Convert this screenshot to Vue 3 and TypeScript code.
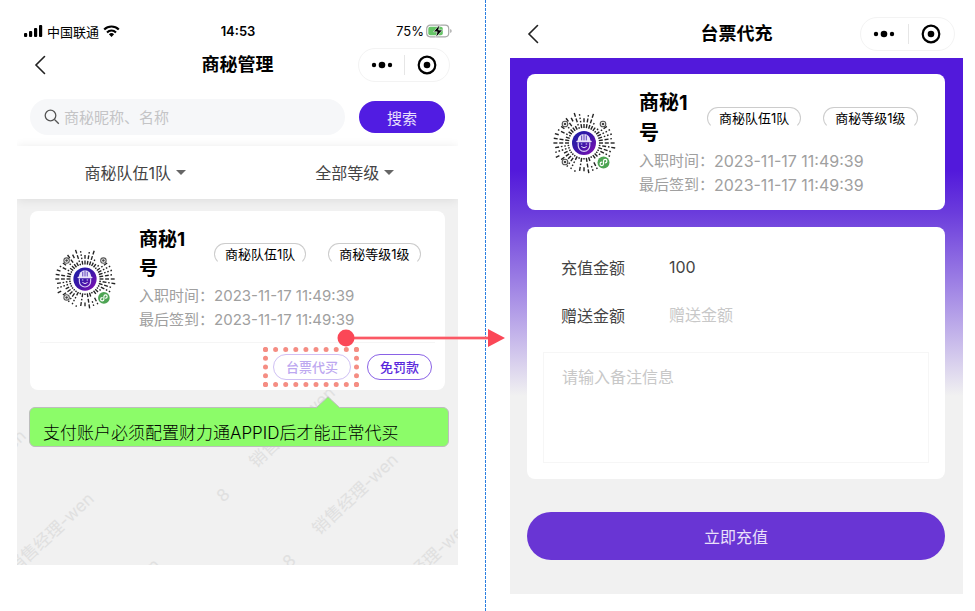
<script setup lang="ts">
import { ref } from 'vue'

interface Tick {
  x1: number
  y1: number
  x2: number
  y2: number
  w: number
}

interface Mark {
  x: number
  y: number
  text: string
}

const keyword = ref('')
const amount = ref('100')
const gift = ref('')
const remark = ref('')
const team = ref('商秘队伍1队')
const level = ref('全部等级')

const member = {
  name: '商秘1号',
  tags: ['商秘队伍1队', '商秘等级1级'],
  rows: [
    { label: '入职时间：', value: '2023-11-17 11:49:39' },
    { label: '最后签到：', value: '2023-11-17 11:49:39' },
  ],
}

// Radial code: dashes along evenly spaced rays, leaving room for the finders and the badge
function buildTicks(): Tick[] {
  const list: Tick[] = []
  const reserved = [
    [13, 13, 4],
    [51, 13, 4],
    [13, 51, 4],
    [51, 52, 8],
  ]
  let seed = 11
  const next = (): number => {
    seed = (seed * 1103 + 377) % 7919
    return seed / 7919
  }
  const rays = 40
  for (let i = 0; i < rays; i++) {
    const angle = (i / rays) * Math.PI * 2
    const cos = Math.cos(angle)
    const sin = Math.sin(angle)
    let r = 15
    while (r < 30) {
      const len = next() > 0.5 ? 4 : 1.6
      const end = Math.min(r + len, 32)
      const mid = (r + end) / 2
      const mx = 32 + cos * mid
      const my = 32 + sin * mid
      const blocked = reserved.some(([x, y, d]) => Math.hypot(mx - x, my - y) < d)
      if (!blocked && (r < 16 || next() > 0.2)) {
        list.push({
          x1: 32 + cos * r,
          y1: 32 + sin * r,
          x2: 32 + cos * end,
          y2: 32 + sin * end,
          w: 1.4,
        })
      }
      r = end + 1.8
    }
  }
  return list
}

const ticks = buildTicks()

const marks: Mark[] = [
  { x: -34, y: 271, text: '销售经理-wen' },
  { x: 34, y: 334, text: '销售经理-wen' },
  { x: 100, y: 400, text: '销售经理-wen' },
  { x: 275, y: 228, text: '销售经理-wen' },
  { x: 338, y: 295, text: '销售经理-wen' },
  { x: 411, y: 361, text: '销售经理-wen' },
  { x: 206, y: 296, text: '8' },
  { x: 272, y: 362, text: '8' },
]
</script>

<template>
  <main class="board">
    <svg class="defs" aria-hidden="true">
      <defs>
        <linearGradient id="face-fill" x1="0" y1="0" x2="1" y2="1">
          <stop offset="0" stop-color="#1b1fa6" />
          <stop offset="0.5" stop-color="#3c16a8" />
          <stop offset="1" stop-color="#8a10b4" />
        </linearGradient>
        <symbol id="code" viewBox="0 0 64 64">
          <line
            v-for="(t, i) in ticks"
            :key="i"
            :x1="t.x1"
            :y1="t.y1"
            :x2="t.x2"
            :y2="t.y2"
            :stroke-width="t.w"
            stroke="#222"
          />
          <g fill="#fff" stroke="#555" stroke-width="1.1">
            <circle cx="13" cy="13" r="2.800" />
            <circle cx="51" cy="13" r="2.800" />
            <circle cx="13" cy="51" r="2.800" />
          </g>
          <g fill="#444">
            <circle cx="13" cy="13" r="1.300" />
            <circle cx="51" cy="13" r="1.300" />
            <circle cx="13" cy="51" r="1.300" />
          </g>
          <circle cx="32" cy="32" r="12" fill="url(#face-fill)" />
          <path d="M25.500 30a6.500 7 0 0 1 13 0z" fill="#e9e3fa" />
          <path d="M29.700 29.500v-5M32 29.500v-6.500M34.300 29.500v-5" stroke="#4b2bb0" stroke-width="0.900" />
          <path d="M25 30.500h14" stroke="#e9e3fa" stroke-width="1.500" stroke-linecap="round" />
          <path d="M26.200 31.500v3a5.800 5.800 0 0 0 11.600 0v-3" fill="none" stroke="#d9cdf5" stroke-width="1.200" />
          <path d="M29.300 35.500q2.700 2.600 5.400 0M28.800 33h1.500M33.700 33h1.500" fill="none" stroke="#e9e3fa" stroke-width="1" />
          <circle cx="51.500" cy="51.500" r="6" fill="#4da453" />
          <path
            d="M49.800 51.200a1.700 1.700 0 1 0 1.700 1.800v-3a1.700 1.700 0 1 1 1.800 1.800"
            fill="none"
            stroke="#fff"
            stroke-width="1.200"
            stroke-linecap="round"
          />
        </symbol>
        <symbol id="back" viewBox="0 0 12 20">
          <path d="M10.500 1.500 2 10l8.500 8.500" fill="none" stroke="#222" stroke-width="1.600" stroke-linecap="round" />
        </symbol>
        <symbol id="dots" viewBox="0 0 22 8">
          <circle cx="3" cy="4" r="2.200" />
          <circle cx="11" cy="4" r="3.300" />
          <circle cx="19" cy="4" r="2.200" />
        </symbol>
        <symbol id="target" viewBox="0 0 20 20">
          <circle cx="10" cy="10" r="8.300" fill="none" stroke="#000" stroke-width="2.200" />
          <circle cx="10" cy="10" r="3.300" />
        </symbol>
      </defs>
    </svg>

    <section class="screen manage">
      <div class="status">
        <div class="carrier">
          <svg width="19" height="12" viewBox="0 0 19 12" aria-hidden="true">
            <rect x="0" y="8" width="3.200" height="4" rx="1" />
            <rect x="5" y="6" width="3.200" height="6" rx="1" />
            <rect x="10" y="3" width="3.200" height="9" rx="1" />
            <rect x="15" y="0" width="3.200" height="12" rx="1" />
          </svg>
          <span>中国联通</span>
          <svg width="17" height="12" viewBox="0 0 17 12" aria-hidden="true">
            <path d="M1.200 4.500a10.400 10.400 0 0 1 14.600 0" fill="none" stroke="#000" stroke-width="2.200" />
            <path d="M4 7.400a6.400 6.400 0 0 1 9 0" fill="none" stroke="#000" stroke-width="2.100" />
            <path d="M8.500 12 5.900 9.300a3.700 3.700 0 0 1 5.200 0z" />
          </svg>
        </div>
        <strong class="clock">14:53</strong>
        <div class="power">
          <span>75%</span>
          <svg width="26" height="14" viewBox="0 0 26 14" aria-hidden="true">
            <rect x="0.700" y="1.200" width="22" height="11.600" rx="3.500" fill="none" stroke="#a8a8a8" stroke-width="1.200" />
            <rect x="2.300" y="2.800" width="14.500" height="8.400" rx="2" fill="#65c466" />
            <path d="M24.200 5v4q1.500-.6 1.500-2t-1.500-2z" fill="#a8a8a8" />
            <path d="M13.800.5 7.500 7.800h3.700L9.700 13.500 16.500 6h-3.900z" stroke="#fff" stroke-width=".6" />
          </svg>
        </div>
      </div>

      <header class="nav">
        <button class="back" type="button" aria-label="返回"><svg><use href="#back" /></svg></button>
        <h1>商秘管理</h1>
        <div class="capsule">
          <button type="button" aria-label="更多"><svg class="dots"><use href="#dots" /></svg></button>
          <button type="button" aria-label="关闭"><svg class="target"><use href="#target" /></svg></button>
        </div>
      </header>

      <form class="search" @submit.prevent>
        <label class="search-box">
          <svg width="16" height="16" viewBox="0 0 16 16" aria-hidden="true">
            <circle cx="6.500" cy="6.500" r="5.300" />
            <path d="m10.500 10.500 4.300 4.300" />
          </svg>
          <input v-model="keyword" type="text" placeholder="商秘昵称、名称" aria-label="商秘昵称、名称" />
        </label>
        <button class="search-go" type="submit">搜索</button>
      </form>

      <div class="filters">
        <div class="filter">
          <select v-model="team" aria-label="队伍"><option>商秘队伍1队</option></select>
          <i class="caret" />
        </div>
        <div class="filter">
          <select v-model="level" aria-label="等级"><option>全部等级</option></select>
          <i class="caret" />
        </div>
      </div>

      <div class="list">
        <svg class="watermark" aria-hidden="true">
          <text v-for="(m, i) in marks" :key="i" :transform="`translate(${m.x} ${m.y}) rotate(-43)`" dy="6">{{ m.text }}</text>
        </svg>

        <article class="card member-card">
          <div class="member">
            <svg class="avatar" role="img" aria-label="小程序码"><use href="#code" /></svg>
            <div class="info">
              <div class="headline">
                <h2>{{ member.name }}</h2>
                <span v-for="tag in member.tags" :key="tag" class="tag">{{ tag }}</span>
              </div>
              <p v-for="row in member.rows" :key="row.label" class="row">
                <span>{{ row.label }}</span><span class="when">{{ row.value }}</span>
              </p>
            </div>
          </div>
          <div class="actions">
            <div class="spot"><button class="pill faded" type="button">台票代买</button></div>
            <button class="pill" type="button">免罚款</button>
          </div>

          <svg class="arrow" viewBox="0 0 168 18" aria-hidden="true">
            <path d="M9 9h143" stroke="#fb8b90" stroke-width="3" />
            <path d="M9 9h143" stroke="#fb4757" stroke-width="1.600" />
            <circle cx="9" cy="9" r="8.500" />
            <path d="M151 0v18l17-9z" />
          </svg>

          <div class="callout">
            <svg class="tip" width="24" height="13" viewBox="0 0 24 13" aria-hidden="true">
              <path d="M0 12 12 .8 24 12v1H0z" fill="#8cfc69" />
              <path d="M0 12 12 .8 24 12" fill="none" stroke="#bdbdbd" />
            </svg>
            支付账户必须配置财力通APPID后才能正常代买
          </div>
        </article>
      </div>
    </section>

    <div class="divider" />

    <section class="screen recharge">
      <header class="nav">
        <button class="back" type="button" aria-label="返回"><svg><use href="#back" /></svg></button>
        <h1>台票代充</h1>
        <div class="capsule">
          <button type="button" aria-label="更多"><svg class="dots"><use href="#dots" /></svg></button>
          <button type="button" aria-label="关闭"><svg class="target"><use href="#target" /></svg></button>
        </div>
      </header>

      <form class="body" @submit.prevent>
        <article class="card">
          <div class="member">
            <svg class="avatar" role="img" aria-label="小程序码"><use href="#code" /></svg>
            <div class="info">
              <div class="headline">
                <h2>{{ member.name }}</h2>
                <span v-for="tag in member.tags" :key="tag" class="tag">{{ tag }}</span>
              </div>
              <p v-for="row in member.rows" :key="row.label" class="row">
                <span>{{ row.label }}</span><span class="when">{{ row.value }}</span>
              </p>
            </div>
          </div>
        </article>

        <div class="card fields">
          <div class="field">
            <label for="amount">充值金额</label>
            <input id="amount" v-model="amount" type="text" />
          </div>
          <div class="field">
            <label for="gift">赠送金额</label>
            <input id="gift" v-model="gift" type="text" placeholder="赠送金额" />
          </div>
          <textarea v-model="remark" placeholder="请输入备注信息" aria-label="备注信息" />
        </div>

        <button class="submit" type="submit">立即充值</button>
      </form>
    </section>
  </main>
</template>

<style>
body {
  margin: 0;
  background: #fff;
}
</style>

<style scoped>
.board {
  display: grid;
  grid-template-columns: 441fr 52px 453fr;
  align-items: start;
  box-sizing: border-box;
  min-height: 100vh;
  padding: 0 12px 0 17px;
  font-family: Inter, "Noto Sans CJK SC", sans-serif;
  color: #000;
}

.board *,
.board *::before {
  box-sizing: border-box;
}

.defs {
  position: absolute;
  width: 0;
  height: 0;
}

button,
input,
select,
textarea {
  margin: 0;
  padding: 0;
  border: 0;
  background: none;
  font: inherit;
  color: inherit;
  outline: none;
}

h1,
h2,
p {
  margin: 0;
}

svg {
  display: block;
  flex: none;
}

.divider {
  align-self: stretch;
  width: 1px;
  margin-left: 27px;
  background: repeating-linear-gradient(#2b7fe0 0 3px, #fff 3px 4px);
}

/* status bar */
.status {
  display: grid;
  grid-template-columns: 1fr auto 1fr;
  align-items: center;
  height: 48px;
  padding: 14px 6px 0 7px;
  font-size: 13px;
}

.carrier,
.power {
  display: flex;
  align-items: center;
  gap: 4px;
}

.power {
  justify-content: flex-end;
  gap: 2px;
}

.clock {
  font-weight: 600;
}

/* navigation bar */
.nav {
  display: grid;
  grid-template-columns: 1fr auto 1fr;
  align-items: center;
  height: 34px;
  padding: 0 8px;
}

.recharge .nav {
  height: 58px;
  padding-top: 10px;
}

.nav h1 {
  font-size: 18px;
  line-height: 26px;
  font-weight: 700;
}

.back {
  justify-self: start;
  padding-left: 9px;
}

.back svg {
  width: 12px;
  height: 20px;
}

.capsule {
  display: flex;
  justify-self: end;
  width: 92px;
  height: 34px;
  border: 1px solid #f3f3f3;
  border-radius: 17px;
}

.recharge .capsule {
  width: 95px;
}

.capsule button {
  display: flex;
  flex: 1;
  align-items: center;
  justify-content: center;
}

.capsule button + button {
  background: linear-gradient(#e6e6e6, #e6e6e6) left center / 1px 20px no-repeat;
}

.dots {
  width: 22px;
  height: 8px;
}

.target {
  width: 20px;
  height: 20px;
}

/* search */
.search {
  display: flex;
  align-items: center;
  gap: 14px;
  padding: 17px 13px 11px;
}

.search-box {
  display: flex;
  flex: 1;
  align-items: center;
  gap: 4px;
  height: 36px;
  padding: 0 14px;
  border-radius: 18px;
  background: #f6f7f9;
}

.search-box svg {
  fill: none;
  stroke: #555;
  stroke-width: 1.3;
}

.search-box input {
  flex: 1;
  min-width: 0;
  font-size: 15px;
}

.search-box input::placeholder {
  color: #c4c4c6;
}

.search-go {
  width: 86px;
  height: 32px;
  border-radius: 16px;
  background: #511ce2;
  color: #e9e0fc;
  font-size: 15px;
}

/* filters */
.filters {
  position: relative;
  z-index: 1;
  display: grid;
  grid-template-columns: 1fr 1fr;
  gap: 13px;
  height: 53px;
  padding-left: 15px;
  background: #fff;
  box-shadow: 0 1px 10px rgba(0, 0, 0, 0.09);
  clip-path: inset(-10px 0 -14px);
}

.filter {
  display: flex;
  align-items: center;
  justify-content: center;
  gap: 5px;
}

.filter select {
  appearance: none;
  field-sizing: content;
  font-size: 16px;
  color: #444;
}

.caret {
  border: 5px solid transparent;
  border-top-color: #666;
  border-bottom: 0;
}

/* list */
.list {
  position: relative;
  min-height: 366px;
  padding: 12px 13px;
  background: #f1f1f1;
}

.watermark {
  position: absolute;
  inset: 0;
  width: 100%;
  height: 100%;
  overflow: hidden;
  font-size: 17px;
  text-anchor: middle;
  fill: #e0e0e0;
}

.card {
  position: relative;
  border-radius: 8px;
  background: #fff;
}

.member {
  display: flex;
  align-items: center;
  gap: 23px;
  padding: 14px 10px 10px 24px;
}

.recharge .member {
  padding: 14px 10px 13px 25px;
}

.avatar {
  width: 62px;
  height: 62px;
}

.recharge .avatar {
  width: 64px;
  height: 64px;
}

.headline {
  display: flex;
  align-items: center;
  padding-bottom: 1px;
}

.headline h2 {
  width: 60px;
  margin-right: 15px;
  font-size: 19px;
  line-height: 29px;
  font-weight: 700;
}

.recharge .headline h2 {
  margin-right: 8px;
  font-size: 20px;
  line-height: 30px;
}

.tag {
  height: 22px;
  padding: 0 10px;
  border: 1px solid #ccc;
  border-bottom-color: transparent;
  border-radius: 11px;
  font-size: 13px;
  line-height: 20px;
  white-space: nowrap;
}

.recharge .tag {
  padding: 0 11px;
}

.tag + .tag {
  margin-left: 22px;
}

.row {
  display: flex;
  font-size: 15px;
  line-height: 24px;
  color: #a0a0a0;
  white-space: nowrap;
}

.recharge .when {
  font-size: 16px;
}

.actions {
  display: flex;
  align-items: center;
  justify-content: flex-end;
  gap: 8px;
  height: 48px;
  margin: 0 10px;
  padding-right: 3px;
  border-top: 1px solid #f5f5f5;
}

.spot {
  padding: 2px 3px 2px 5px;
  border: 5px dotted #f58d83;
}

.pill {
  display: block;
  height: 26px;
  padding: 0 12px;
  border: 1px solid #8a62e6;
  border-radius: 13px;
  color: #5a28dc;
  font-size: 13px;
  font-weight: 500;
  line-height: 24px;
}

.pill.faded {
  border-color: #cfc0f4;
  color: #bda8f0;
}

.arrow {
  position: absolute;
  right: -60px;
  bottom: 43px;
  z-index: 2;
  width: 168px;
  height: 18px;
  fill: #fb4757;
}

.callout {
  position: absolute;
  top: calc(100% + 17px);
  right: -4px;
  left: -1px;
  height: 40px;
  padding: 12px 13px 0;
  border: 1px solid #bdbdbd;
  border-radius: 6px;
  background: #8cfc69;
  font-size: 17px;
  font-weight: 300;
  line-height: 26px;
  white-space: nowrap;
}

.tip {
  position: absolute;
  top: -12px;
  right: 108px;
}

/* recharge screen */
.body {
  display: flex;
  flex-direction: column;
  gap: 17px;
  padding: 16px 18px 34px 17px;
  background: linear-gradient(#5219db 0 112px, #6b3cdc 155px, #a88fe6 240px, #f1f1f1 338px);
}

.fields {
  padding: 16px;
}

.field {
  display: flex;
  align-items: center;
  height: 48px;
  padding-left: 18px;
  font-size: 16px;
  color: #444;
}

.field label {
  width: 108px;
}

.field input {
  flex: 1;
  min-width: 0;
}

.field input::placeholder,
.fields textarea::placeholder {
  color: #c8c8c8;
}

.fields textarea {
  display: block;
  width: 100%;
  height: 111px;
  margin-top: 13px;
  padding: 12px 18px;
  border: 1px solid #f6f6f6;
  font-size: 16px;
  line-height: 24px;
  resize: none;
}

.submit {
  height: 48px;
  margin-top: 16px;
  border-radius: 24px;
  background: #6935d4;
  color: #e9e0fa;
  font-size: 16px;
}
</style>
